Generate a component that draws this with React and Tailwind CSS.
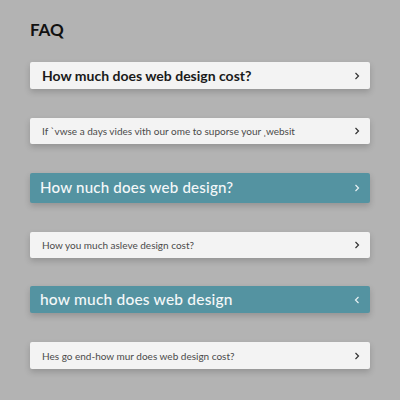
const items = [
  {
    q: "How much does web design cost?",
    variant: "bold",
    h: "h-[27px]",
    mt: "mt-[24px]",
  },
  {
    q: "If \u02cbvwse a days vides vith our ome to suporse your \u02ccwebsit",
    variant: "light",
    size: "text-[10px]",
    h: "h-[26px]",
    mt: "mt-[29px]",
  },
  {
    q: "How nuch does web design?",
    variant: "teal",
    size: "text-[15.1px]",
    h: "h-[30px]",
    mt: "mt-[29px]",
  },
  {
    q: "How you much asleve design cost?",
    variant: "light",
    size: "text-[10px]",
    h: "h-[26px]",
    mt: "mt-[29px]",
  },
  {
    q: "how much does web design",
    variant: "teal",
    size: "text-[15.5px]",
    h: "h-[27px]",
    mt: "mt-[28px]",
    back: true,
  },
  {
    q: "Hes go end-how mur does web design cost?",
    variant: "light",
    size: "text-[10px]",
    h: "h-[27px]",
    mt: "mt-[29px]",
  },
];

function Chevron({ back, className }) {
  return (
    <svg
      width="6"
      height="8"
      viewBox="0 0 6 8"
      fill="none"
      className={className}
    >
      <path
        d={back ? "M4.5 1 L1.5 4 L4.5 7" : "M1.5 1 L4.5 4 L1.5 7"}
        stroke="currentColor"
        strokeWidth="1.2"
      />
    </svg>
  );
}

function FaqItem({ item }) {
  const teal = item.variant === "teal";
  const textClass =
    item.variant === "bold"
      ? "text-[14px] font-bold text-[#1a1a1a]"
      : teal
        ? `${item.size} font-medium text-[#f4f8f9] tracking-[0.2px]`
        : `${item.size} text-[#4a4a4a]`;

  return (
    <div
      className={`${item.mt} ${item.h} flex items-center justify-between rounded-[2px] pr-[10px] shadow-[0_3px_6px_rgba(0,0,0,0.18)] ${
        teal ? "bg-[#5493a1] pl-[10px]" : "bg-[#f3f3f3] pl-[12px]"
      }`}
    >
      <span className={`${textClass} leading-none`}>{item.q}</span>
      <Chevron
        back={item.back}
        className={teal ? "text-[#e8f2f4]" : "text-[#333]"}
      />
    </div>
  );
}

export default function App() {
  return (
    <div
      className="w-[400px] h-[400px] bg-[#b3b3b3] px-[30px] pt-[21px]"
      style={{ fontFamily: "Lato, 'Noto Sans', sans-serif" }}
    >
      <h1 className="text-[17px] font-bold text-[#111] leading-[17px]">FAQ</h1>
      {items.map((item, i) => (
        <FaqItem key={i} item={item} />
      ))}
    </div>
  );
}
